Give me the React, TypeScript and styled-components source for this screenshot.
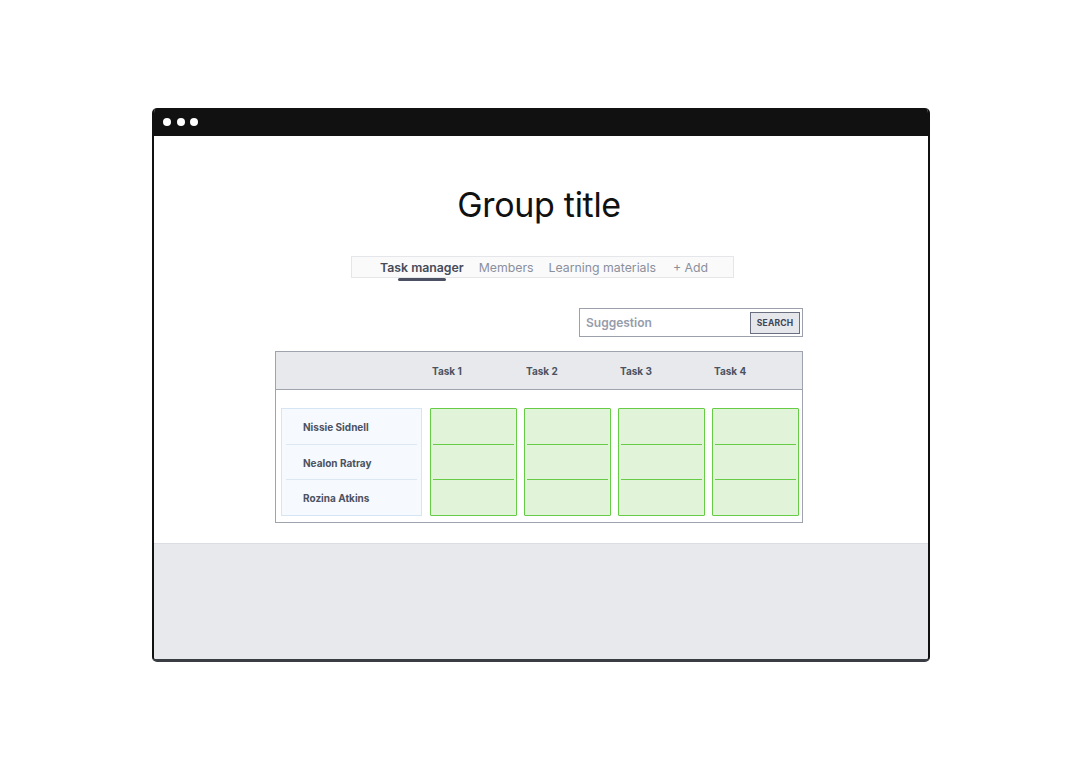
import React from "react";
import styled, { createGlobalStyle } from "styled-components";

const Global = createGlobalStyle`
  html, body { margin: 0; padding: 0; background: #ffffff; }
  body { font-family: Inter, "Noto Sans", sans-serif; }
`;

const Page = styled.div`
  width: 1082px;
  height: 769px;
  padding-top: 108px;
  box-sizing: border-box;
  display: flex;
  justify-content: center;
  align-items: flex-start;
`;

const Frame = styled.div`
  width: 778px;
  box-sizing: border-box;
  border: 2px solid #111111;
  border-top: none;
  border-bottom: 3px solid #3a3d44;
  border-radius: 5px;
  overflow: hidden;
  display: flex;
  flex-direction: column;
`;

const TitleBar = styled.div`
  height: 28px;
  background: #111111;
  display: flex;
  align-items: center;
  gap: 5.5px;
  padding-left: 11px;
  margin: 0 -2px;
`;

const Dot = styled.span`
  width: 8px;
  height: 8px;
  border-radius: 50%;
  background: #ffffff;
`;

const Content = styled.div`
  background: #ffffff;
  display: flex;
  flex-direction: column;
  align-items: center;
  padding: 49px 0 20px;
`;

const Title = styled.h1`
  margin: 0 4px 0 0;
  font-family: Inter, sans-serif;
  font-weight: 400;
  font-size: 34px;
  line-height: 40px;
  color: #111111;
  letter-spacing: -0.3px;
`;

const Tabs = styled.nav`
  margin: 31px 0 0 3px;
  width: 383px;
  height: 22px;
  box-sizing: border-box;
  border: 1px solid #e4e6ea;
  background: #fafafb;
  display: flex;
  justify-content: flex-start;
  align-items: center;
  gap: 15px;
  padding: 1px 0 0 28px;
`;

const Tab = styled.span<{ $active?: boolean; $extra?: boolean }>`
  position: relative;
  font-size: 12.3px;
  font-weight: ${(p) => (p.$active ? 600 : 400)};
  color: ${(p) => (p.$active ? "#454b59" : "#8a8f9c")};
  line-height: 20px;
  margin-left: ${(p) => (p.$extra ? "2px" : "0")};
  ${(p) =>
    p.$active &&
    `
    &::after {
      content: "";
      position: absolute;
      left: 50%;
      transform: translateX(-50%);
      bottom: -3px;
      width: 48px;
      height: 3px;
      border-radius: 2px;
      background: #4b5163;
    }
  `}
`;

const Column = styled.div`
  width: 528px;
  display: flex;
  flex-direction: column;
  margin-right: 4px;
`;

const SearchBox = styled.div`
  margin-top: 30px;
  align-self: flex-end;
  width: 224px;
  height: 29px;
  box-sizing: border-box;
  border: 1.5px solid #9ba0ab;
  display: flex;
  align-items: center;
  justify-content: space-between;
  padding: 0 2px 0 6px;
`;

const Placeholder = styled.span`
  font-size: 12px;
  font-weight: 600;
  color: #969cab;
`;

const SearchButton = styled.span`
  width: 50px;
  height: 22px;
  box-sizing: border-box;
  border: 1.5px solid #6b7080;
  background: #e5e7eb;
  display: flex;
  align-items: center;
  justify-content: center;
  font-size: 8.5px;
  font-weight: 700;
  color: #3f4554;
  letter-spacing: 0.2px;
`;

const Table = styled.div`
  margin-top: 14px;
  border: 1px solid #9ea3ad;
  display: flex;
  flex-direction: column;
`;

const Grid = styled.div`
  display: grid;
  grid-template-columns: 142px repeat(4, 87px);
  column-gap: 7px;
  padding-left: 5px;
`;

const Header = styled(Grid)`
  height: 37px;
  background: #e8e9ed;
  border-bottom: 1px solid #9ea3ad;
  align-items: center;
`;

const HeadCell = styled.span`
  font-size: 10px;
  font-weight: 700;
  color: #4b5261;
  padding-left: 2px;
`;

const Body = styled(Grid)`
  padding-top: 18px;
  padding-bottom: 6px;
`;

const Names = styled.div`
  height: 108px;
  box-sizing: border-box;
  border: 1px solid #d5e5f4;
  background: #f6f9fd;
  display: flex;
  flex-direction: column;
  margin-right: 1px;
`;

const NameRow = styled.div<{ $last?: boolean }>`
  flex: 1;
  display: flex;
  align-items: center;
  margin: 0 4px;
  padding: 1px 0 0 17px;
  border-bottom: ${(p) => (p.$last ? "none" : "1.5px solid #dbe7f3")};
  font-size: 10px;
  font-weight: 700;
  color: #4b5261;
`;

const Cell = styled.div`
  height: 108px;
  box-sizing: border-box;
  border: 1.8px solid #66cb45;
  border-radius: 1px;
  background: #e1f4d9;
  display: flex;
  flex-direction: column;
`;

const Slot = styled.div<{ $last?: boolean }>`
  flex: 1;
  margin: 0 2px;
  border-bottom: ${(p) => (p.$last ? "none" : "1.8px solid #66cb45")};
`;

const Footer = styled.div`
  height: 115px;
  background: #e8e9ed;
  border-top: 1px solid #dcdde2;
`;

const names = ["Nissie Sidnell", "Nealon Ratray", "Rozina Atkins"];
const tasks = ["Task 1", "Task 2", "Task 3", "Task 4"];

export default function App() {
  return (
    <>
      <Global />
      <Page>
        <Frame>
          <TitleBar>
            <Dot />
            <Dot />
            <Dot />
          </TitleBar>
          <Content>
            <Title>Group title</Title>
            <Tabs>
              <Tab $active>Task manager</Tab>
              <Tab>Members</Tab>
              <Tab>Learning materials</Tab>
              <Tab $extra>+ Add</Tab>
            </Tabs>
            <Column>
              <SearchBox>
                <Placeholder>Suggestion</Placeholder>
                <SearchButton>SEARCH</SearchButton>
              </SearchBox>
              <Table>
                <Header>
                  <span />
                  {tasks.map((t) => (
                    <HeadCell key={t}>{t}</HeadCell>
                  ))}
                </Header>
                <Body>
                  <Names>
                    {names.map((n, i) => (
                      <NameRow key={n} $last={i === names.length - 1}>
                        {n}
                      </NameRow>
                    ))}
                  </Names>
                  {tasks.map((t) => (
                    <Cell key={t}>
                      <Slot />
                      <Slot />
                      <Slot $last />
                    </Cell>
                  ))}
                </Body>
              </Table>
            </Column>
          </Content>
          <Footer />
        </Frame>
      </Page>
    </>
  );
}
